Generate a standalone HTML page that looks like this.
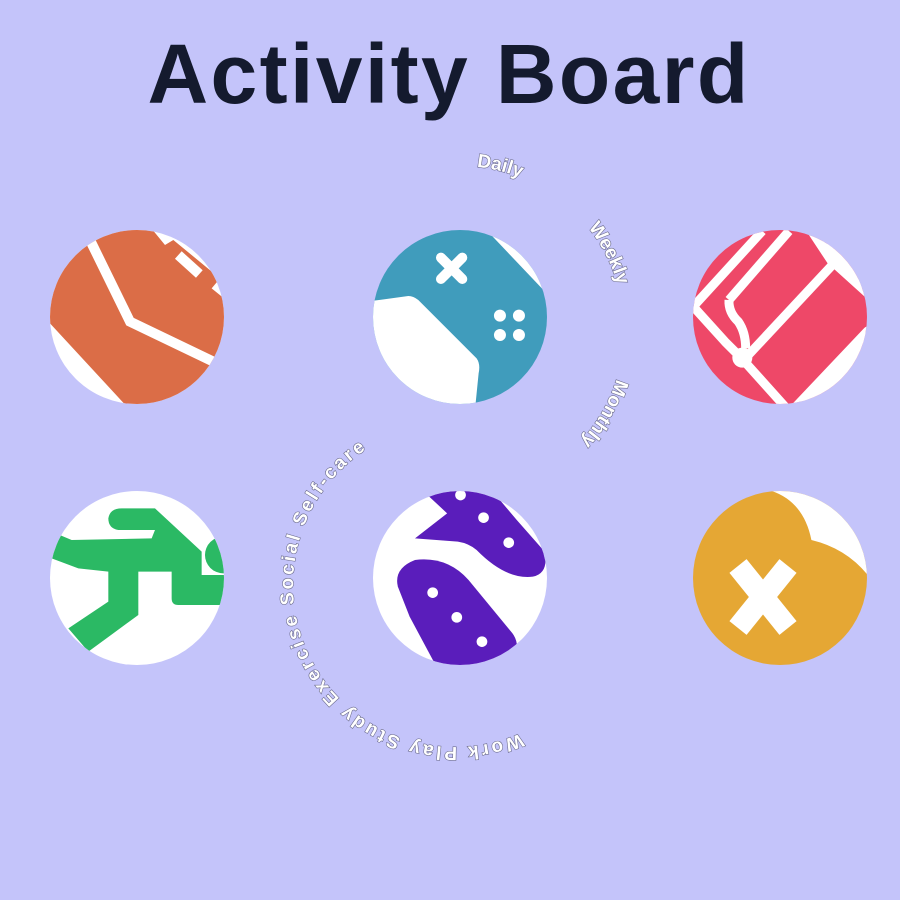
<!DOCTYPE html>
<html><head><meta charset="utf-8"><style>
html,body{margin:0;padding:0;background:#c4c4fa;width:900px;height:900px;overflow:hidden}
svg{display:block}
</style></head><body>
<svg width="900" height="900" viewBox="0 0 900 900" xmlns="http://www.w3.org/2000/svg">
<rect width="900" height="900" fill="#c4c4fa"/>
<text x="449" y="103" text-anchor="middle" font-family="Liberation Sans, sans-serif" font-weight="bold" font-size="84" letter-spacing="2.4" fill="#141a2e">Activity Board</text>
<defs>
<clipPath id="c1"><circle cx="137" cy="317" r="87"/></clipPath>
<clipPath id="c2"><circle cx="460" cy="317" r="87"/></clipPath>
<clipPath id="c3"><circle cx="780" cy="317" r="87"/></clipPath>
<clipPath id="c4"><circle cx="137" cy="578" r="87"/></clipPath>
<clipPath id="c5"><circle cx="460" cy="578" r="87"/></clipPath>
<clipPath id="c6"><circle cx="780" cy="578" r="87"/></clipPath>
<path id="a1" d="M624,330 A164,164 0 1 1 296,330 A164,164 0 1 1 624,330"/>
<path id="a2" d="M617,585 A162,162 0 1 1 293,585 A162,162 0 1 1 617,585"/>
</defs>
<!-- orange -->
<g clip-path="url(#c1)">
<rect x="40" y="220" width="200" height="200" fill="#fff"/>
<g transform="translate(40,220) scale(0.3333)">
<path d="M30,310 L270,570 L570,570 L570,250 L515,205 L540,175 L400,60 L375,75 L330,20 L0,0 L0,310 Z" fill="#db6d47"/>
<polyline points="150,60 270,305 520,425" fill="none" stroke="#fff" stroke-width="30"/>
<line x1="415" y1="105" x2="478" y2="162" stroke="#fff" stroke-width="30"/>
</g></g>
<!-- teal -->
<g clip-path="url(#c2)">
<rect x="370" y="228" width="180" height="180" fill="#409cbc"/>
<g transform="translate(40,220) scale(0.3333)">
<path d="M980,245 L1105,228 Q1120,228 1135,240 L1310,415 Q1322,432 1316,460 L1305,570 L980,570 Z" fill="#fff"/>
<path d="M1330,20 L1515,215 L1570,215 L1570,0 Z" fill="#fff"/>
<line x1="1203" y1="113" x2="1267" y2="177" stroke="#fff" stroke-width="30" stroke-linecap="round"/>
<line x1="1267" y1="113" x2="1203" y2="177" stroke="#fff" stroke-width="30" stroke-linecap="round"/>
<circle cx="1380" cy="287" r="18" fill="#fff"/><circle cx="1437" cy="287" r="18" fill="#fff"/>
<circle cx="1380" cy="345" r="18" fill="#fff"/><circle cx="1437" cy="345" r="18" fill="#fff"/>
</g></g>
<!-- red -->
<g clip-path="url(#c3)">
<rect x="690" y="228" width="180" height="180" fill="#ee4868"/>
<g transform="translate(685,225) scale(0.3333)" fill="none" stroke="#fff" stroke-width="27" stroke-linejoin="round">
<path d="M330,548 L548,318 L548,548 Z" fill="#fff"/>
<path d="M425,55 L445,112 L548,205 L548,0 Z" fill="#fff"/>
<path d="M20,250 L232,18"/>
<path d="M25,245 L120,350 Q150,380 170,400 L300,545"/>
<path d="M132,225 L312,18"/>
<path d="M132,225 Q130,262 160,290 Q182,322 182,370"/>
<path d="M192,388 L442,120"/>
<path d="M380,18 L442,112"/>
<circle cx="172" cy="398" r="30" fill="#fff" stroke="none"/>
</g></g>
<!-- green -->
<g clip-path="url(#c4)">
<rect x="45" y="488" width="185" height="185" fill="#fff"/>
<g transform="translate(45,485) scale(0.3333)">
<path d="M20,140 L80,165 L320,160 L330,135 L220,135 Q190,130 190,100 Q195,70 230,70 L330,70 L470,200 L470,270 L560,270 L560,360 L400,360 Q380,360 380,340 L380,260 L280,260 L280,390 L130,500 L70,430 L190,350 L190,260 L100,250 L20,220 Z" fill="#2bb964"/>
<circle cx="535" cy="210" r="55" fill="#2bb964"/>
</g></g>
<!-- purple -->
<g clip-path="url(#c5)">
<rect x="370" y="488" width="180" height="180" fill="#fff"/>
<g transform="translate(40,480) scale(0.5357,0.3333)">
<path d="M720,40 L760,100 L700,175 L780,185 Q800,190 815,210 Q870,300 920,290 Q950,280 942,215 L890,120 L840,25 Z" fill="#5a1dbb"/>
<ellipse cx="785" cy="45" rx="10" ry="16" fill="#fff"/><ellipse cx="828" cy="113" rx="10" ry="16" fill="#fff"/><ellipse cx="875" cy="188" rx="10" ry="16" fill="#fff"/>
<path d="M700,240 Q660,265 668,320 L690,410 L740,560 L880,560 Q900,500 882,460 L800,300 Q760,228 700,240 Z" fill="#5a1dbb"/>
<ellipse cx="733" cy="338" rx="10" ry="16" fill="#fff"/><ellipse cx="778" cy="412" rx="10" ry="16" fill="#fff"/><ellipse cx="825" cy="485" rx="10" ry="16" fill="#fff"/>
</g></g>
<!-- yellow -->
<g clip-path="url(#c6)">
<rect x="690" y="488" width="180" height="180" fill="#e5a734"/>
<g transform="translate(40,480) scale(0.5357,0.3333)">
<path d="M1360,30 Q1425,60 1440,180 Q1505,205 1545,285 L1545,0 L1360,0 Z" fill="#fff"/>
</g>
<line x1="738" y1="566" x2="788" y2="628" stroke="#fff" stroke-width="22"/>
<line x1="788" y1="566" x2="738" y2="628" stroke="#fff" stroke-width="22"/>
</g>
<!-- arc texts -->
<g font-family="Liberation Sans, sans-serif" font-weight="bold" font-size="19" fill="#fff" stroke="#6b6b8c" stroke-width="1.2" paint-order="stroke">
<text><textPath href="#a1" startOffset="812" text-anchor="middle">Daily</textPath></text>
<text><textPath href="#a1" startOffset="952" text-anchor="middle">Weekly</textPath></text>
<text><textPath href="#a1" startOffset="86" text-anchor="middle">Monthly</textPath></text>
<text><textPath href="#a2" startOffset="187" textLength="482" lengthAdjust="spacing">Work Play Study Exercise Social Self-care</textPath></text>
</g>
</svg>
</body></html>
